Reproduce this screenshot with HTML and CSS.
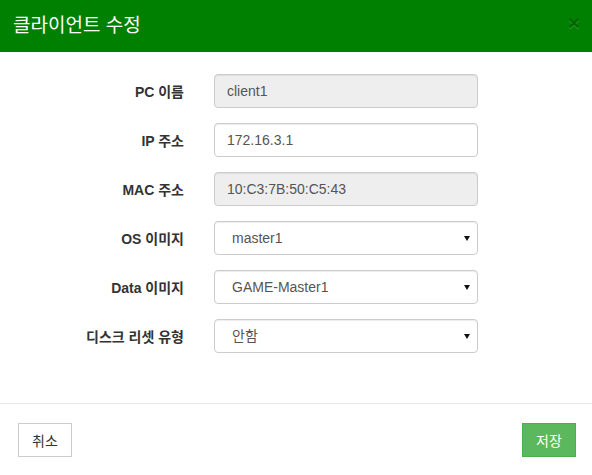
FILE: index.html
```html
<!DOCTYPE html>
<html lang="ko">
<head>
<meta charset="utf-8">
<title>클라이언트 수정</title>
<link rel="stylesheet" href="styles.css">
</head>
<body>
<div class="modal">
  <div class="modal-header">
    <h4 class="modal-title">클라이언트 수정</h4>
    <button class="close" type="button">×</button>
  </div>
  <form class="modal-body">
    <div class="form-row">
      <label class="form-label">PC 이름</label>
      <input class="form-control" type="text" value="client1" disabled>
    </div>
    <div class="form-row">
      <label class="form-label">IP 주소</label>
      <input class="form-control" type="text" value="172.16.3.1">
    </div>
    <div class="form-row">
      <label class="form-label">MAC 주소</label>
      <input class="form-control" type="text" value="10:C3:7B:50:C5:43" disabled>
    </div>
    <div class="form-row">
      <label class="form-label">OS 이미지</label>
      <div class="select-wrap">
        <select class="form-control form-select"><option>master1</option></select>
      </div>
    </div>
    <div class="form-row">
      <label class="form-label">Data 이미지</label>
      <div class="select-wrap">
        <select class="form-control form-select"><option>GAME-Master1</option></select>
      </div>
    </div>
    <div class="form-row">
      <label class="form-label">디스크 리셋 유형</label>
      <div class="select-wrap">
        <select class="form-control form-select"><option>안함</option></select>
      </div>
    </div>
  </form>
  <div class="modal-footer">
    <button class="btn btn-default" type="button">취소</button>
    <button class="btn btn-success" type="button">저장</button>
  </div>
</div>
</body>
</html>
```

FILE: styles.css
```css
html, body {
  margin: 0;
  padding: 0;
  background: #fff;
}
body {
  font-family: "Liberation Sans", "Noto Sans CJK KR", Arial, sans-serif;
  font-size: 14px;
  color: #333;
  width: 592px;
  height: 475px;
  overflow: hidden;
}
.modal {
  display: flex;
  flex-direction: column;
  width: 592px;
}
.modal-header {
  background: #008000;
  height: 52px;
  box-sizing: border-box;
  padding: 0 12px 0 13px;
  display: flex;
  align-items: center;
  justify-content: space-between;
}
.modal-title {
  margin: 0;
  color: #fff;
  font-family: "Noto Sans CJK KR", "Liberation Sans", sans-serif;
  font-size: 19px;
  font-weight: 400;
  line-height: 26px;
  margin-top: -4px;
}
.close {
  border: 0;
  background: transparent;
  padding: 0;
  font-family: "Liberation Sans", Arial, sans-serif;
  font-size: 21px;
  font-weight: 700;
  line-height: 1;
  color: #000;
  opacity: 0.2;
  text-shadow: 0 1px 0 #fff;
  margin-top: -8px;
}
.modal-body {
  margin: 0;
  padding: 22px 0 50px 0;
  display: flex;
  flex-direction: column;
  gap: 15px;
}
.form-row {
  display: flex;
  align-items: center;
  gap: 30px;
  height: 34px;
}
.form-label {
  width: 184px;
  text-align: right;
  font-weight: 700;
  font-size: 14px;
  color: #333;
}
.form-control {
  box-sizing: border-box;
  width: 264px;
  height: 34px;
  padding: 6px 12px;
  font-family: "Liberation Sans", "Noto Sans CJK KR", Arial, sans-serif;
  font-size: 14px;
  line-height: 20px;
  color: #555;
  background: #fff;
  border: 1px solid #ccc;
  border-radius: 4px;
  box-shadow: inset 0 1px 1px rgba(0,0,0,.075);
  margin: 0;
}
.form-control:disabled {
  background: #eee;
  opacity: 1;
  color: #555;
}
.select-wrap {
  position: relative;
  width: 264px;
  height: 34px;
}
.form-select {
  appearance: none;
  -webkit-appearance: none;
  padding-left: 17px;
}
.select-wrap::after {
  content: "";
  position: absolute;
  right: 8px;
  top: 15px;
  border-left: 3px solid transparent;
  border-right: 3px solid transparent;
  border-top: 5px solid #111;
  pointer-events: none;
}
.modal-footer {
  border-top: 1px solid #e5e5e5;
  padding: 19px 16px 18px 18px;
  display: flex;
  justify-content: space-between;
  align-items: center;
}
.btn {
  box-sizing: border-box;
  height: 34px;
  padding: 6px 12px;
  font-family: "Noto Sans CJK KR", "Liberation Sans", sans-serif;
  font-size: 14px;
  line-height: 20px;
  border: 1px solid transparent;
  border-radius: 0;
  cursor: pointer;
}
.btn-default {
  background: #fff;
  border-color: #ccc;
  color: #333;
  width: 54px;
}
.btn-success {
  background: #5cb85c;
  border-color: #4cae4c;
  color: #fff;
  width: 54px;
}
```
